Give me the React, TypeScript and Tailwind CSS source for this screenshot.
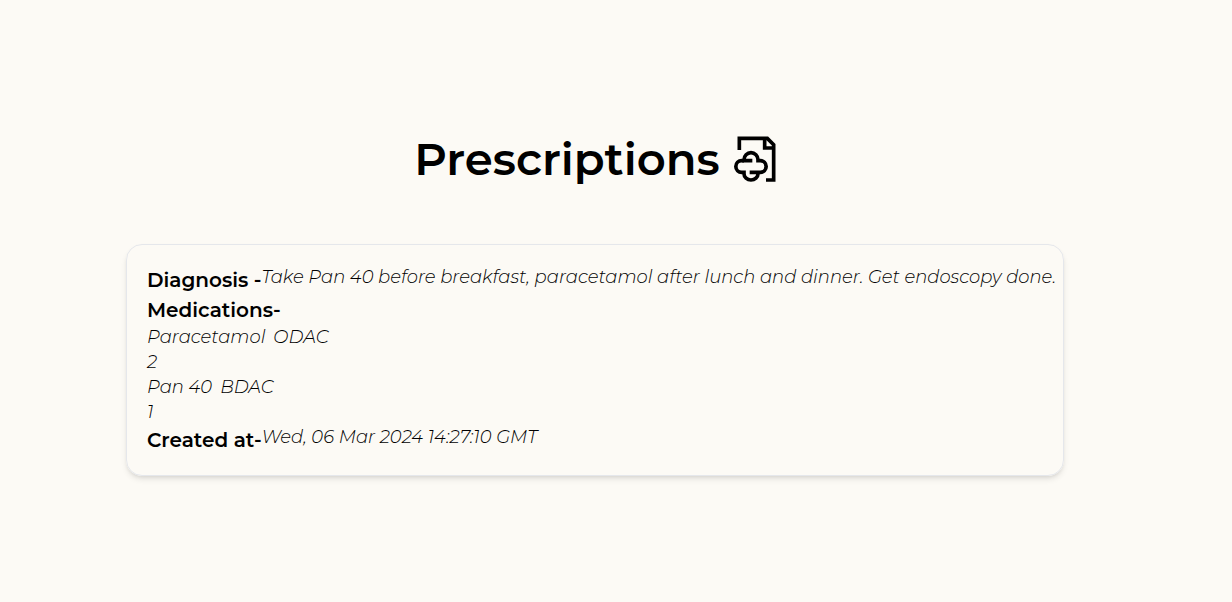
const medications = [
  { name: "Paracetamol", dosage: "ODAC", duration: 2 },
  { name: "Pan 40", dosage: "BDAC", duration: 1 },
];

const label = "text-[20px] leading-[30px] font-semibold whitespace-nowrap";
const value = "text-[18px] leading-[25px] font-light italic";

function PrescriptionIcon() {
  return (
    <svg
      viewBox="41 32 126 136"
      className="h-[46px] w-[42px] shrink-0"
      fill="none"
      stroke="currentColor"
      strokeWidth="11"
      aria-hidden="true"
    >
      <path d="M57 73V38H141L160 57V163H137" />
      <path d="M133 38V67H160" />
      <path d="M96 105H71V102A20 20 0 0 1 113 102V105H120A17.5 17.5 0 0 1 120 140H88" />
      <path d="M113 140V144A20 18 0 0 1 71 144V140H64A17.5 17.5 0 0 1 64 105H71" />
    </svg>
  );
}

export default function App() {
  return (
    <main className="min-h-screen bg-[#fcfaf5] pt-[124px] pr-[168px] pb-[126px] pl-[126px] font-['Montserrat','Inter',sans-serif] text-black">
      <h1 className="flex items-center justify-center gap-[14px] text-[45px] leading-[70px] font-semibold">
        Prescriptions
        <PrescriptionIcon />
      </h1>
      <section className="mt-[50px] rounded-2xl border border-gray-200 p-5 shadow-md">
        <div className="flex">
          <h2 className={label}>Diagnosis -</h2>
          <p className={`${value} lg:whitespace-nowrap`}>
            Take Pan 40 before breakfast, paracetamol after lunch and dinner. Get endoscopy done.
          </p>
        </div>
        <h2 className={label}>Medications-</h2>
        <ul>
          {medications.map((item) => (
            <li key={item.name} className={value}>
              <p className="flex gap-2">
                <span>{item.name}</span>
                <span>{item.dosage}</span>
              </p>
              <p>{item.duration}</p>
            </li>
          ))}
        </ul>
        <div className="flex">
          <h2 className={label}>Created at-</h2>
          <p className={value}>Wed, 06 Mar 2024 14:27:10 GMT</p>
        </div>
      </section>
    </main>
  );
}
